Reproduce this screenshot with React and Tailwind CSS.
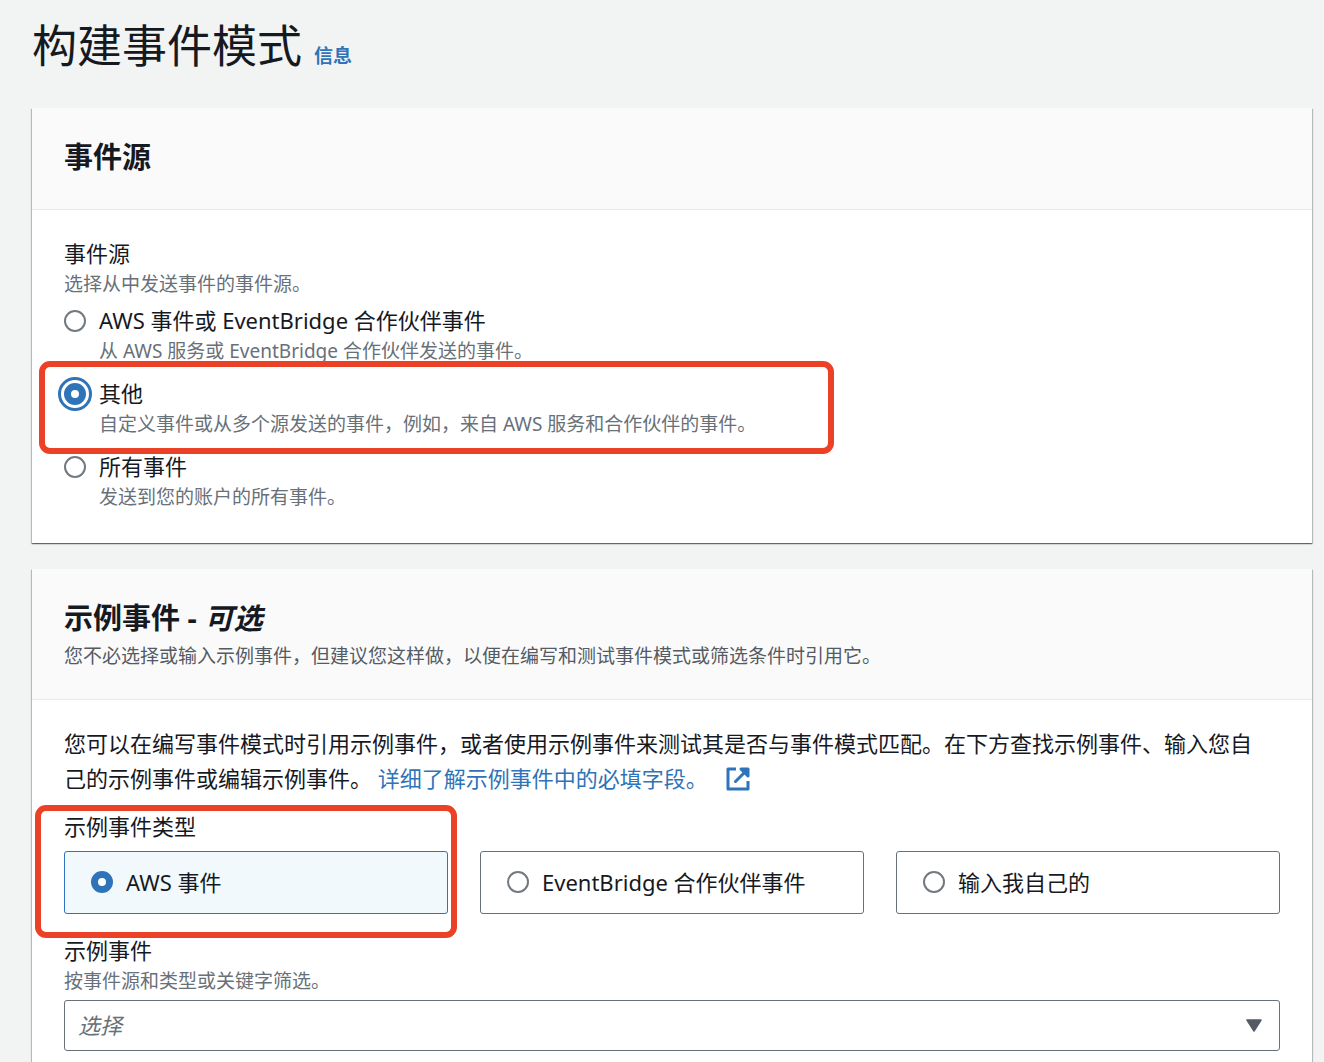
import { useState } from "react";

const SOURCES = [
  {
    id: "partner",
    label: "AWS 事件或 EventBridge 合作伙伴事件",
    hint: "从 AWS 服务或 EventBridge 合作伙伴发送的事件。",
  },
  {
    id: "other",
    label: "其他",
    hint: "自定义事件或从多个源发送的事件，例如，来自 AWS 服务和合作伙伴的事件。",
    marked: true,
  },
  { id: "all", label: "所有事件", hint: "发送到您的账户的所有事件。" },
];

const SAMPLE_TYPES = [
  { id: "aws", label: "AWS 事件" },
  { id: "eventbridge", label: "EventBridge 合作伙伴事件" },
  { id: "own", label: "输入我自己的" },
];

const RADIO =
  "size-[22px] shrink-0 appearance-none rounded-full border-2 border-[#727980] bg-white checked:border-[7px] checked:border-[#2f73b8]";

const HINT = "text-[19px] leading-8";

function Highlight({ className }) {
  return (
    <div
      aria-hidden="true"
      className={`pointer-events-none absolute z-10 rounded-[11px] border-6 border-[#eb4127] ${className}`}
    />
  );
}

function Card({ className = "", header, children }) {
  return (
    <section
      className={`bg-white shadow-[0_1px_1px_0_rgba(0,20,30,0.4),1px_1px_1px_0_rgba(0,20,30,0.2),-1px_1px_1px_0_rgba(0,20,30,0.2)] ${className}`}
    >
      <header className="border-b border-[#e8eaea] bg-[#fafafa] px-8">{header}</header>
      {children}
    </section>
  );
}

function ExternalIcon() {
  return (
    <svg
      viewBox="0 0 24 24"
      className="ml-[18px] inline-block size-6 align-[-4px]"
      fill="none"
      stroke="currentColor"
      strokeWidth="3"
      strokeLinejoin="round"
      aria-hidden="true"
    >
      <path d="M10 2H2v20h20v-8" />
      <path d="M15 2h7v7z" fill="currentColor" />
      <path d="M20 4L9.500 14.500" strokeLinecap="round" />
    </svg>
  );
}

export default function App() {
  const [source, setSource] = useState("other");
  const [type, setType] = useState("aws");

  return (
    <main className="flex min-h-screen flex-col bg-[#f2f4f3] pr-3 pl-8 font-['Noto_Sans','Noto_Sans_CJK_SC',sans-serif] text-[22px] leading-[30px] text-[#16191f]">
      <div className="flex h-[108px] items-baseline gap-3 pt-[14px]">
        <h1 className="text-[45px] leading-[64px]">构建事件模式</h1>
        <a href="#info" className="text-[19px] font-bold text-[#2f73b8]">
          信息
        </a>
      </div>

      <Card
        header={<h2 className="pt-[31px] pb-[34px] text-[29px] leading-9 font-bold">事件源</h2>}
      >
        <fieldset className="px-8 pt-7 pb-[30px]">
          <legend className="contents">
            <span className="block">事件源</span>
          </legend>
          <p className={`mb-[5px] text-[#687078] ${HINT}`}>选择从中发送事件的事件源。</p>
          <div className="flex flex-col gap-[11px]">
            {SOURCES.map((item) => (
              <div key={item.id} className="relative flex gap-[13px]">
                {item.marked && (
                  <Highlight className="-top-[17px] -left-[25px] h-[93px] w-[795px]" />
                )}
                <input
                  type="radio"
                  id={item.id}
                  name="source"
                  checked={source === item.id}
                  onChange={() => setSource(item.id)}
                  aria-describedby={`${item.id}-hint`}
                  className={`mt-[5px] outline-offset-3 outline-[#2f73b8] checked:outline-3 ${RADIO}`}
                />
                <div>
                  <label htmlFor={item.id} className="block">
                    {item.label}
                  </label>
                  <p id={`${item.id}-hint`} className={`text-[#687078] ${HINT}`}>
                    {item.hint}
                  </p>
                </div>
              </div>
            ))}
          </div>
        </fieldset>
      </Card>

      <Card
        className="mt-[26px] flex-1"
        header={
          <div className="pt-[31px] pb-[27px]">
            <h2 className="mb-1 text-[29px] leading-9 font-bold">
              示例事件 - <i>可选</i>
            </h2>
            <p className={`text-[#545b64] ${HINT}`}>
              您不必选择或输入示例事件，但建议您这样做，以便在编写和测试事件模式或筛选条件时引用它。
            </p>
          </div>
        }
      >
        <div className="px-8 pt-[26px] pb-[11px]">
          <p className="pr-4 leading-[35px]">
            您可以在编写事件模式时引用示例事件，或者使用示例事件来测试其是否与事件模式匹配。在下方查找示例事件、输入您自己的示例事件或编辑示例事件。{" "}
            <a href="#fields" className="text-[#2f73b8]">
              详细了解示例事件中的必填字段。
              <ExternalIcon />
            </a>
          </p>

          <div role="radiogroup" aria-labelledby="type-label" className="mt-[15px]">
            <div id="type-label" className="mb-[10px]">
              示例事件类型
            </div>
            <div className="grid grid-cols-3 gap-8">
              {SAMPLE_TYPES.map((item) => (
                <div key={item.id} className="relative">
                  {item.id === "aws" && (
                    <Highlight className="-top-[46px] -right-[9px] -bottom-6 -left-[29px]" />
                  )}
                  <label className="flex h-[63px] items-center gap-[13px] rounded-[3px] border border-[#687078] px-[26px] pb-[2px] has-checked:border-[#2f73b8] has-checked:bg-[#f1f9fd]">
                    <input
                      type="radio"
                      name="type"
                      checked={type === item.id}
                      onChange={() => setType(item.id)}
                      className={RADIO}
                    />
                    {item.label}
                  </label>
                </div>
              ))}
            </div>
          </div>

          <label htmlFor="sample" className="mt-[21px] block">
            示例事件
          </label>
          <p id="sample-hint" className={`mb-[3px] text-[#687078] ${HINT}`}>
            按事件源和类型或关键字筛选。
          </p>
          <div className="relative">
            <select
              id="sample"
              aria-describedby="sample-hint"
              className="block h-[51px] w-full appearance-none rounded-[3px] border border-[#687078] bg-white px-[13px] pb-[2px] text-[#687078] italic"
            >
              <option>选择</option>
            </select>
            <svg
              viewBox="0 0 16 13"
              className="pointer-events-none absolute top-[19px] right-[18px] h-[13px] w-4"
              aria-hidden="true"
            >
              <path
                d="M1 1h14L8 12z"
                fill="#545b64"
                stroke="#545b64"
                strokeWidth="1.5"
                strokeLinejoin="round"
              />
            </svg>
          </div>
        </div>
      </Card>
    </main>
  );
}
